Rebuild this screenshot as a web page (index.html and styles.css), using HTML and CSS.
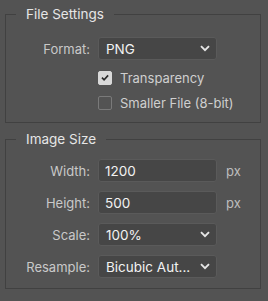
FILE: index.html
```html
<!DOCTYPE html>
<html>
<head>
    <meta charset="utf-8">
    <title>Export</title>
    <link rel="stylesheet" href="styles.css">
</head>
<body>
    <!-- File settings -->
    <fieldset class="group group-file">
        <legend>File Settings</legend>
        <div class="rows">
            <label class="lbl">Format:</label>
            <div class="select">
                <span>PNG</span>
                <svg class="chev" width="10" height="7" viewBox="0 0 10 7"><path d="M1 1.2 L5 5.2 L9 1.2" fill="none" stroke="#e6e6e6" stroke-width="1.9"/></svg>
            </div>
            <span></span>

            <div class="check">
                <span class="box on">
                    <svg width="13" height="13" viewBox="0 0 13 13"><path d="M3.2 6.6 L5.5 8.9 L9.9 4.2" fill="none" stroke="#2b2b2b" stroke-width="1.8"/></svg>
                </span>
                <span>Transparency</span>
            </div>

            <div class="check">
                <span class="box"></span>
                <span>Smaller File (8-bit)</span>
            </div>
        </div>
    </fieldset>

    <!-- Image size -->
    <fieldset class="group group-size">
        <legend>Image Size</legend>
        <div class="rows">
            <label class="lbl">Width:</label>
            <input class="field" type="text" value="1200">
            <span class="unit">px</span>

            <label class="lbl">Height:</label>
            <input class="field" type="text" value="500">
            <span class="unit">px</span>

            <label class="lbl">Scale:</label>
            <div class="select">
                <span>100%</span>
                <svg class="chev" width="10" height="7" viewBox="0 0 10 7"><path d="M1 1.2 L5 5.2 L9 1.2" fill="none" stroke="#e6e6e6" stroke-width="1.9"/></svg>
            </div>
            <span></span>

            <label class="lbl">Resample:</label>
            <div class="select">
                <span>Bicubic Aut...</span>
                <svg class="chev" width="10" height="7" viewBox="0 0 10 7"><path d="M1 1.2 L5 5.2 L9 1.2" fill="none" stroke="#e6e6e6" stroke-width="1.9"/></svg>
            </div>
            <span></span>
        </div>
    </fieldset>
</body>
</html>
```

FILE: styles.css
```css
body {
    margin: 0;
    padding: 6px 6px 0 5px;
    background-color: #535353;
    color: #cfcfcf;
    font-family: "Inter", "Liberation Sans", sans-serif;
    font-size: 13px;
}

.group {
    margin: 0;
    padding: 0;
    border: 1px solid #414141;
    width: 254px;
}

.group legend {
    margin-left: 10px;
    padding: 0 10px;
    line-height: 16px;
    font-size: 13.5px;
    color: #e6e6e6;
}

.group-file .rows {
    padding: 15px 0 7px 0;
    grid-template-rows: 23px 30px 25px;
}

.group-size {
    margin-top: 8px;
}

.group-size .rows {
    padding: 12px 0 10px 0;
    row-gap: 9px;
}

.rows {
    display: grid;
    grid-template-columns: 84px 119px auto;
    grid-auto-rows: 23px;
    column-gap: 8px;
    align-items: center;
}

.lbl {
    text-align: right;
    color: #c9c9c9;
    font-size: 13px;
}

.select,
.field {
    box-sizing: border-box;
    height: 23px;
    background-color: #464646;
    border: 1px solid #5a5a5a;
    border-radius: 3px;
    color: #f2f2f2;
    font-family: inherit;
    font-size: 13.5px;
}

.select {
    display: flex;
    align-items: center;
    justify-content: space-between;
    padding: 0 6px 0 7px;
}

.field {
    width: 100%;
    padding: 0 6px;
    outline: none;
}

.unit {
    padding-left: 1px;
    color: #bdbdbd;
    font-size: 13px;
}

.check {
    grid-column: 2 / 4;
    align-self: end;
    display: flex;
    align-items: center;
    gap: 8px;
    height: 25px;
    white-space: nowrap;
    color: #cfcfcf;
    font-size: 13px;
}

.box {
    box-sizing: border-box;
    width: 14px;
    height: 14px;
    border: 1px solid #7a7a7a;
    border-radius: 2px;
    display: flex;
    align-items: center;
    justify-content: center;
}

.box.on {
    background-color: #d9d9d9;
    border-color: #d9d9d9;
}
```
